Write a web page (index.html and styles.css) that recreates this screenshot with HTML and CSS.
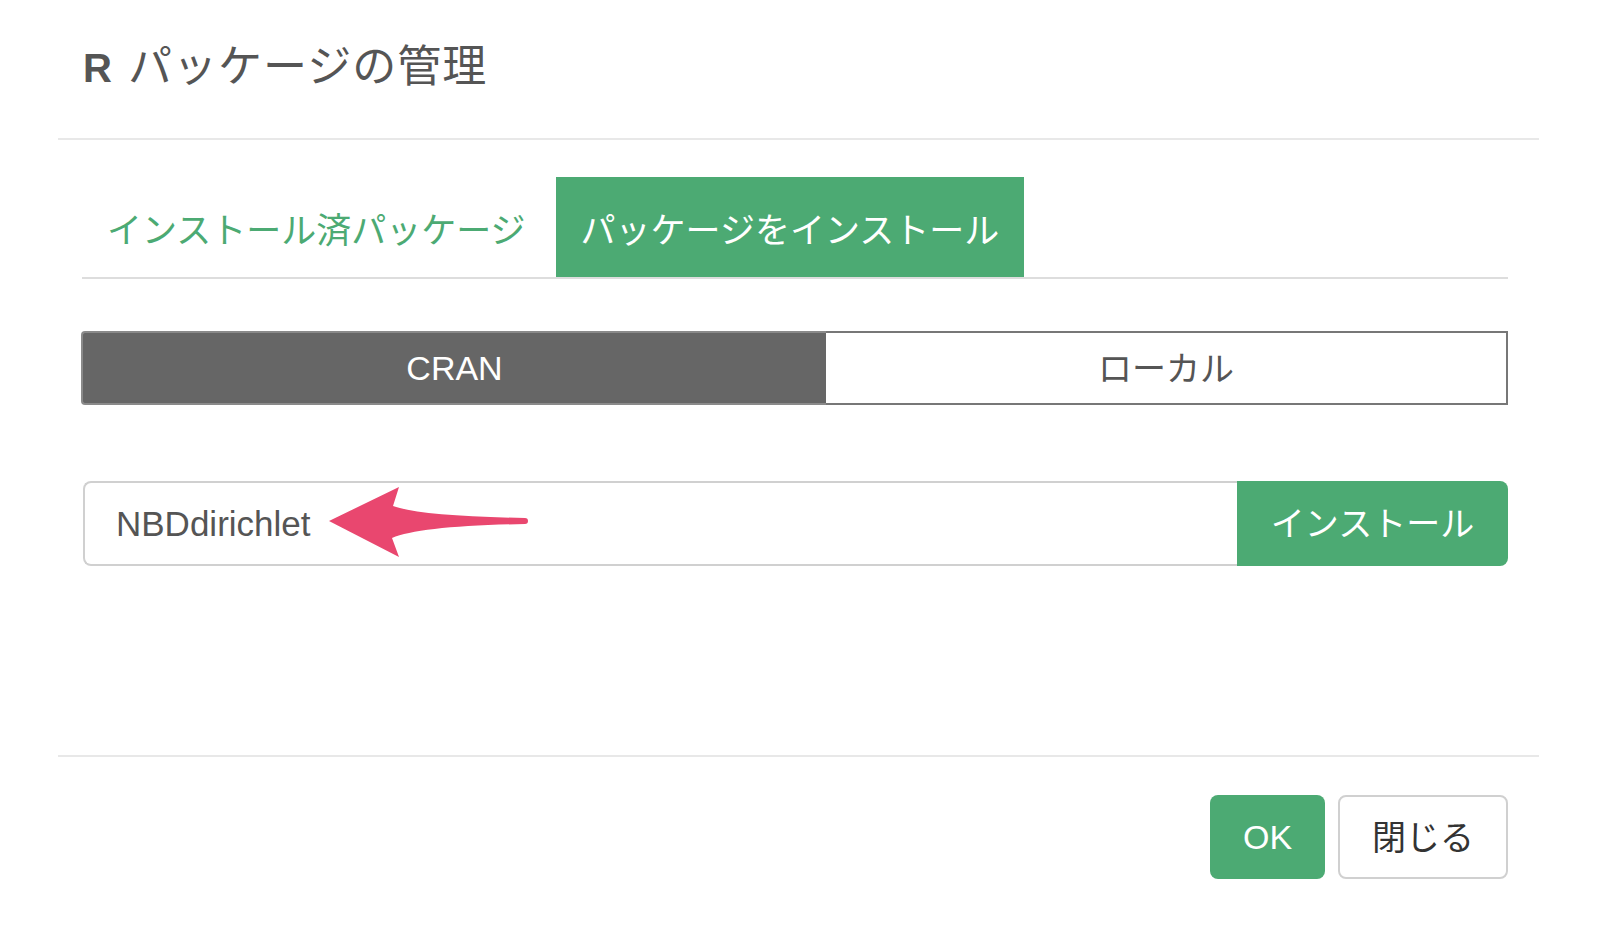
FILE: index.html
```html
<!DOCTYPE html>
<html>
<head>
    <title>R パッケージの管理</title>
    <link rel="stylesheet" href="styles.css">
</head>
<body>
    <div class="modal">
        <div class="modal-header">
            <h4 class="modal-title"><b>R</b> パッケージの管理</h4>
        </div>

        <div class="modal-body">
            <ul class="nav-tabs">
                <li class="tab">インストール済パッケージ</li>
                <li class="tab active">パッケージをインストール</li>
            </ul>

            <div class="source-switch">
                <div class="source source-on">CRAN</div>
                <div class="source">ローカル</div>
            </div>

            <div class="input-group">
                <input type="text" class="package-input" value="NBDdirichlet">
                <button type="button" class="btn-install">インストール</button>

                <!-- annotation arrow -->
                <svg class="arrow" width="206" height="78" viewBox="0 0 206 78">
                    <path d="M4 38 L74 4 L68 23 Q95 33 200 35 A3 3 0 0 1 200 41 Q95 43 67 55 L74 74 Z" fill="#e9476f"/>
                </svg>
            </div>
        </div>

        <div class="modal-footer">
            <button type="button" class="btn btn-ok">OK</button>
            <button type="button" class="btn btn-close">閉じる</button>
        </div>
    </div>
</body>
</html>
```

FILE: styles.css
```css
/* Reset some default styles */
body, h4, ul {
    margin: 0;
    padding: 0;
}

/* Global styles */
body {
    font-family: "Liberation Sans", "Noto Sans CJK JP", sans-serif;
    background-color: #fff;
    color: #555;
}

.modal {
    margin: 0 77px 0 58px;
}

/* Header */
.modal-header {
    height: 140px;
    box-sizing: border-box;
    display: flex;
    align-items: center;
    padding: 0 25px 12px 25px;
    border-bottom: 2px solid #e8e8e8;
}

.modal-title {
    font-size: 44px;
    font-weight: normal;
    letter-spacing: 1px;
    color: #555;
}

.modal-title b {
    font-size: 40px;
    letter-spacing: 3px;
}

/* Body */
.modal-body {
    height: 615px;
    box-sizing: border-box;
    padding: 37px 31px 0 24px;
}

/* Tabs */
.nav-tabs {
    list-style: none;
    display: flex;
    border-bottom: 2px solid #ddd;
}

.tab {
    height: 100px;
    display: flex;
    align-items: center;
    padding: 0 25px;
    margin-right: 5px;
    font-size: 35px;
    color: #4caa73;
}

.tab.active {
    background-color: #4caa73;
    color: #fff;
}

/* CRAN / local switch */
.source-switch {
    display: flex;
    height: 74px;
    margin-top: 52px;
    margin-left: -1px;
}

.source {
    flex: 1;
    display: flex;
    align-items: center;
    justify-content: center;
    padding-bottom: 3px;
    font-size: 34px;
    color: #555;
    background-color: #fff;
    border: 2px solid #777;
    border-left: none;
}

.source-on {
    flex: 0 0 745px;
    box-sizing: border-box;
    padding-bottom: 0;
    background-color: #666;
    color: #fff;
    border: 2px solid #8a8a8a;
    border-right: none;
    border-radius: 4px 0 0 4px;
}

/* Package input */
.input-group {
    position: relative;
    display: flex;
    height: 85px;
    margin-top: 76px;
}

.package-input {
    flex: 1;
    min-width: 0;
    margin: 0 0 0 1px;
    padding: 0 0 0 31px;
    font-family: "Liberation Sans", "Noto Sans CJK JP", sans-serif;
    font-size: 35px;
    color: #555;
    border: 2px solid #d0d0d0;
    border-right: none;
    border-radius: 8px 0 0 8px;
    outline: none;
}

.btn-install {
    width: 271px;
    border: none;
    border-radius: 0 8px 8px 0;
    background-color: #4caa73;
    color: #fff;
    font-family: "Liberation Sans", "Noto Sans CJK JP", sans-serif;
    font-size: 34px;
    padding: 0 0 4px 0;
}

.arrow {
    position: absolute;
    left: 243px;
    top: 2px;
}

/* Footer */
.modal-footer {
    display: flex;
    justify-content: flex-end;
    gap: 13px;
    padding: 38px 31px 0 0;
    border-top: 2px solid #e8e8e8;
}

.btn {
    height: 84px;
    border-radius: 8px;
    font-family: "Liberation Sans", "Noto Sans CJK JP", sans-serif;
    font-size: 34px;
    padding: 0;
}

.btn-ok {
    width: 115px;
    border: none;
    background-color: #4caa73;
    color: #fff;
}

.btn-close {
    width: 170px;
    border: 2px solid #d0d0d0;
    background-color: #fff;
    color: #333;
    padding-bottom: 4px;
}
```
